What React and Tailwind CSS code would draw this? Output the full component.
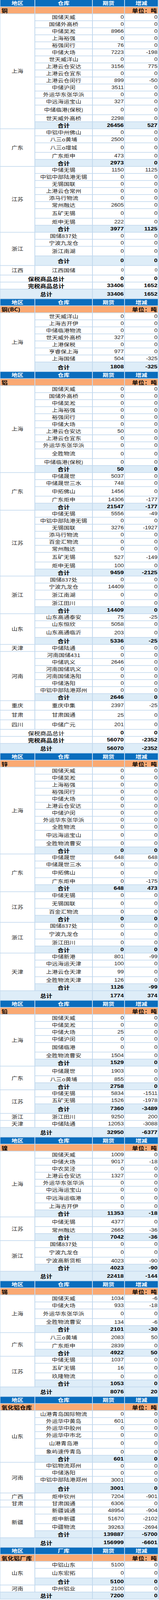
import React from "react";

// rows: "name,qty,change[,t]"  t = taller row
const SECTIONS = [
  {
    metal: "铜",
    groups: [
      {
        region: "上海",
        rows: [
          "国储天威,0,0", "国储外高桥,0,0", "中储吴淞,8966,0", "上海裕强,0,0", "裕强闵行,76,0",
          "中储大场,7223,-198", "世天威洋山,0,0", "上港云仓安达,3156,775", "上港云仓宜东,0,0",
          "上港云仓闵行,899,-50", "中储沪闵,3511,0", "外运华东张华浜,0,0", "中远海运宝山,327,0",
          "中储临港(保税),0,0,t", "世天威外高桥,2298,0",
        ],
        total: "26456,527",
      },
      { region: "广东", rows: ["中铝中州佛山,0,0", "八三o黄埔,2500,0", "八三o增城,0,0,t", "广东炬申,473,0"], total: "2973,0" },
      {
        region: "江苏",
        rows: [
          "中储无锡,1150,1125", "中铝中部陆港无锡,0,0", "无锡国联,0,0", "上港云仓常州,0,0",
          "添马行物流,0,0", "常州融达,2605,0", "五矿无锡,0,0,t", "炬申无锡,222,0",
        ],
        total: "3977,1125",
      },
      { region: "浙江", rows: ["国储837处,0,0", "宁波九龙仓,0,0", "浙江南湖,0,0,t"], total: "0,0,t" },
      { region: "江西", rows: ["江西国储,0,0,t"], small: true },
    ],
    foot: [
      { label: "保税商品总计", v: "0,0", boldLabel: true },
      { label: "完税商品总计", v: "33406,1652", boldLabel: true },
    ],
    grand: "33406,1652,t",
  },
  {
    metal: "铜(BC)",
    groups: [
      {
        region: "上海",
        rows: [
          "世天威洋山,0,0", "上海吉开伊,0,0", "中储临港物流,0,0", "世天威外高桥,327,0",
          "上港保税,0,0", "亨睿保上海,977,0", "上海国储,504,-325",
        ],
        total: "1808,-325,t",
      },
    ],
  },
  {
    metal: "铝",
    groups: [
      {
        region: "上海",
        rows: [
          "国储天威,0,0", "国储外高桥,0,0", "中储吴淞,0,0", "上海裕强,0,0", "裕强闵行,0,0",
          "中储大场,0,0", "上港云仓安达,50,0", "上港云仓宜东,0,0", "外运华东张华浜,0,0",
          "全胜物流,0,0,t", "中储临港(保税),0,0",
        ],
        total: "50,0",
      },
      { region: "广东", rows: ["中储晟世,5037,0", "中储晟世三水,748,0", "中拓佛山,1456,0,t", "广东炬申,14306,-177"], total: "21547,-177" },
      {
        region: "江苏",
        rows: [
          "中储无锡,5556,-49", "中铝中部陆港无锡,0,0", "无锡国联,3276,-1927", "添马行物流,0,0",
          "百金汇物流,0,0", "常州融达,0,0", "五矿无锡,527,-149,t", "炬申无锡,100,0",
        ],
        total: "9459,-2125",
      },
      { region: "浙江", rows: ["国储837处,0,0", "宁波九龙仓,14409,0", "浙江南湖,0,0,t", "浙江田川,0,0"], total: "14409,0" },
      { region: "山东", rows: ["山东高通泰安,75,-25", "山东恒欣,5058,0", "山东高通临沂,203,0,t"], total: "5336,-25" },
      { region: "天津", rows: ["中储陆通,0,0"] },
      {
        region: "河南",
        rows: [
          "河南国储431,0,0", "中储巩义,2646,0", "河南国储巩义,0,0", "河南国储洛阳,0,0",
          "中储洛阳,0,0", "中铝中部陆港郑州,0,0",
        ],
        total: "2646,0",
      },
      { region: "重庆", rows: ["重庆中集,2397,-25,t"] },
      { region: "甘肃", rows: ["甘肃国通,25,0,t"] },
      { region: "四川", rows: ["中储广元,201,0,t"] },
    ],
    foot: [
      { label: "保税商品总计", v: "0,0", boldLabel: false },
      { label: "完税商品总计", v: "56070,-2352", boldLabel: true },
    ],
    grand: "56070,-2352,t",
  },
  {
    metal: "锌",
    groups: [
      {
        region: "上海",
        rows: [
          "国储天威,0,0", "中储吴淞,0,0", "上海裕强,0,0", "裕强闵行,0,0", "中储大场,0,0",
          "上港云仓安达,0,0", "中储沪闵,0,0", "外运华东张华浜,0,0", "全胜物流,0,0",
          "中远海运宝山,0,0,t", "全胜物流曹安,0,0",
        ],
        total: "0,0",
      },
      { region: "广东", rows: ["中储晟世,648,648", "中储晟世三水,0,0", "中拓佛山,0,0,t", "广东炬申,0,-175"], total: "648,473" },
      { region: "江苏", rows: ["中储无锡,0,0", "无锡国联,0,0,t", "百金汇物流,0,0"], total: "0,0" },
      { region: "浙江", rows: ["国储837处,0,0", "宁波九龙仓,0,0,t", "浙江田川,0,0"], total: "0,0" },
      { region: "天津", rows: ["中储新港,801,-99", "中远海运天津,100,0", "上港云仓天津,99,0,t", "全胜物流天津,126,0"], total: "1126,-99" },
    ],
    grand: "1774,374,t",
  },
  {
    metal: "铅",
    groups: [
      {
        region: "上海",
        rows: ["国储天威,0,0", "中储吴淞,0,0", "中储大场,25,0", "中储沪闵,0,0", "国储临港,0,0,t", "全胜物流曹安,1504,0"],
        total: "1529,0",
      },
      { region: "广东", rows: ["中储晟世,1903,0,t", "八三o黄埔,855,0"], total: "2758,0" },
      { region: "江苏", rows: ["中储无锡,5834,-1511", "五矿无锡,1526,-1978"], total: "7360,-3489,t" },
      { region: "浙江", rows: ["浙江田川,9250,200"] },
      { region: "天津", rows: ["中储陆通,12053,-3088"] },
    ],
    grand: "32950,-6377,t",
  },
  {
    metal: "镍",
    groups: [
      {
        region: "上海",
        rows: [
          "国储天威,1009,0", "中储大场,9017,-18", "中农吴泾,0,0", "上港云仓安达,1327,0",
          "外运华东张华浜,0,0", "中远海运宝山,0,0", "中远海运临港,0,0,t", "上海吉开伊,0,0",
        ],
        total: "11353,-18",
      },
      { region: "江苏", rows: ["中储无锡,4377,0,t", "常州融达,2665,-36"], total: "7042,-36" },
      { region: "浙江", rows: ["国储837处,0,0", "宁波九龙仓,0,0,t", "宁波高新货柜,4023,-90"], total: "4023,-90" },
    ],
    grand: "22418,-144,t",
  },
  {
    metal: "锡",
    groups: [
      { region: "上海", rows: ["国储天威,1034,-6", "中储大场,933,-18", "外运华东张华浜,0,0,t", "全胜物流曹安,134,-6"], total: "2101,-30" },
      { region: "广东", rows: ["八三o黄埔,2083,50,t", "广东炬申,2839,0"], total: "4922,50" },
      { region: "江苏", rows: ["中储无锡,1037,0", "五矿无锡,16,0,t", "玖隆物流,0,0"], total: "1053,0" },
    ],
    grand: "8076,20,t",
  },
  {
    metal: "氧化铝仓库",
    groups: [
      {
        region: "山东",
        rows: [
          "山港青岛国际物流,0,0", "外运华中黄岛,601,0", "外运华中胶州,0,0", "外运华中市北,0,0",
          "山港青岛港,0,0,t", "象屿速传青岛,0,0",
        ],
        total: "601,0",
      },
      { region: "河南", rows: ["中铝物流郑州,0,0", "中储洛阳,0,0", "中铝中部陆港郑州,3001,0"], total: "3001,0,t" },
      { region: "广西", rows: ["炬申钦州,7204,-901"] },
      { region: "甘肃", rows: ["甘肃国通,6306,0"] },
      { region: "新疆", rows: ["新疆诚通,48954,-904", "炬申新疆,51670,-2102,t", "中疆物流,39263,-2694"], total: "139887,-5700" },
    ],
    grand: "156999,-6601,t",
  },
  {
    metal: "氧化铝厂库",
    store: "厂库",
    groups: [
      { region: "山东", rows: ["中铝山东,5100,0", "山东宏拓,0,0,t"], total: "5100,0" },
      { region: "河南", rows: ["中州铝业,2100,0"] },
    ],
    grand: "7200,0",
  },
];

const cjk = "font-['Noto_Sans_CJK_SC',sans-serif]";
const num = "font-['Liberation_Sans',Arial,sans-serif]";
const rowH = (t) => (t ? "h-[28px]" : "h-[20px]");
const subBg = "bg-[#deedf8]";
const cell = "flex items-center overflow-hidden whitespace-nowrap leading-[18px]";

function Num({ v, bold, bg = "bg-white", small, t }) {
  return (
    <div
      className={`${cell} ${rowH(t)} ${bg} ${num} justify-end pr-px ${
        bold ? "font-bold text-[15.5px] text-black" : small ? "text-[12.5px] text-[#222]" : "text-[14.5px] text-[#222]"
      }`}
    >
      {v}
    </div>
  );
}

function Section({ s }) {
  const out = [];
  ["地区", s.store || "仓库", "期货", "增减"].forEach((label) => {
    out.push(
      <div key={`h-${label}`} className={`${cell} h-[20px] justify-center bg-[#0a6dbd] text-[15px] font-bold text-white ${cjk}`}>
        {label}
      </div>
    );
  });
  out.push(
    <div key="u1" className={`${cell} h-[20px] bg-[#faa973] pl-[3px] text-[15.5px] font-bold text-black ${cjk}`}>
      {s.metal}
    </div>,
    <div key="u2" className="h-[20px] bg-[#faa973]" />,
    <div key="u3" className="h-[20px] bg-[#faa973]" />,
    <div
      key="u4"
      className={`flex h-[20px] items-center justify-end whitespace-nowrap bg-[#faa973] pr-[2px] text-[15.5px] leading-[18px] tracking-[0.5px] font-bold text-black ${cjk}`}
    >
      单位：吨
    </div>
  );

  s.groups.forEach((g, gi) => {
    const span = g.rows.length + (g.total ? 1 : 0);
    out.push(
      <div
        key={`reg${gi}`}
        className={`flex items-center justify-center bg-white text-[15px] leading-[18px] text-[#222] ${cjk}`}
        style={{ gridRow: `span ${span}` }}
      >
        {g.region}
      </div>
    );
    g.rows.forEach((r, ri) => {
      const [name, q, c, t] = r.split(",");
      out.push(
        <div key={`n${gi}-${ri}`} className={`${cell} ${rowH(t)} justify-center bg-white text-[15px] text-[#222] ${cjk}`}>
          {name}
        </div>,
        <Num key={`q${gi}-${ri}`} v={q} t={t} small={g.small} />,
        <Num key={`c${gi}-${ri}`} v={c} t={t} small={g.small} />
      );
    });
    if (g.total) {
      const [q, c, t] = g.total.split(",");
      out.push(
        <div key={`tn${gi}`} className={`${cell} ${rowH(t)} ${subBg} justify-center text-[15.5px] font-bold text-black ${cjk}`}>
          合计
        </div>,
        <Num key={`tq${gi}`} v={q} t={t} bold bg={subBg} />,
        <Num key={`tc${gi}`} v={c} t={t} bold bg={subBg} />
      );
    }
  });

  (s.foot || []).forEach((f, fi) => {
    const [q, c] = f.v.split(",");
    out.push(
      <div
        key={`fl${fi}`}
        className={`${cell} col-span-2 h-[20px] justify-center bg-white text-[15.5px] text-black ${
          f.boldLabel ? "font-bold" : "font-normal"
        } ${cjk}`}
      >
        {f.label}
      </div>,
      <Num key={`fq${fi}`} v={q} bold />,
      <Num key={`fc${fi}`} v={c} bold />
    );
  });

  if (s.grand) {
    const [q, c, t] = s.grand.split(",");
    out.push(
      <div key="gl" className={`${cell} col-span-2 ${rowH(t)} ${subBg} justify-center text-[15.5px] font-bold text-black ${cjk}`}>
        总计
      </div>,
      <Num key="gq" v={q} t={t} bold bg={subBg} />,
      <Num key="gc" v={c} t={t} bold bg={subBg} />
    );
  }
  return out;
}

export default function App() {
  return (
    <div className="h-[4096px] overflow-hidden">
      <div className="origin-top scale-y-[0.8179]">
        <div className="grid w-[406px] grid-cols-[87px_145px_80px_84px] gap-[2px] bg-[#c3d9ee] pb-[2px] pl-px pr-[3px]">
          {SECTIONS.map((s) => (
            <Section key={s.metal} s={s} />
          ))}
        </div>
      </div>
    </div>
  );
}
